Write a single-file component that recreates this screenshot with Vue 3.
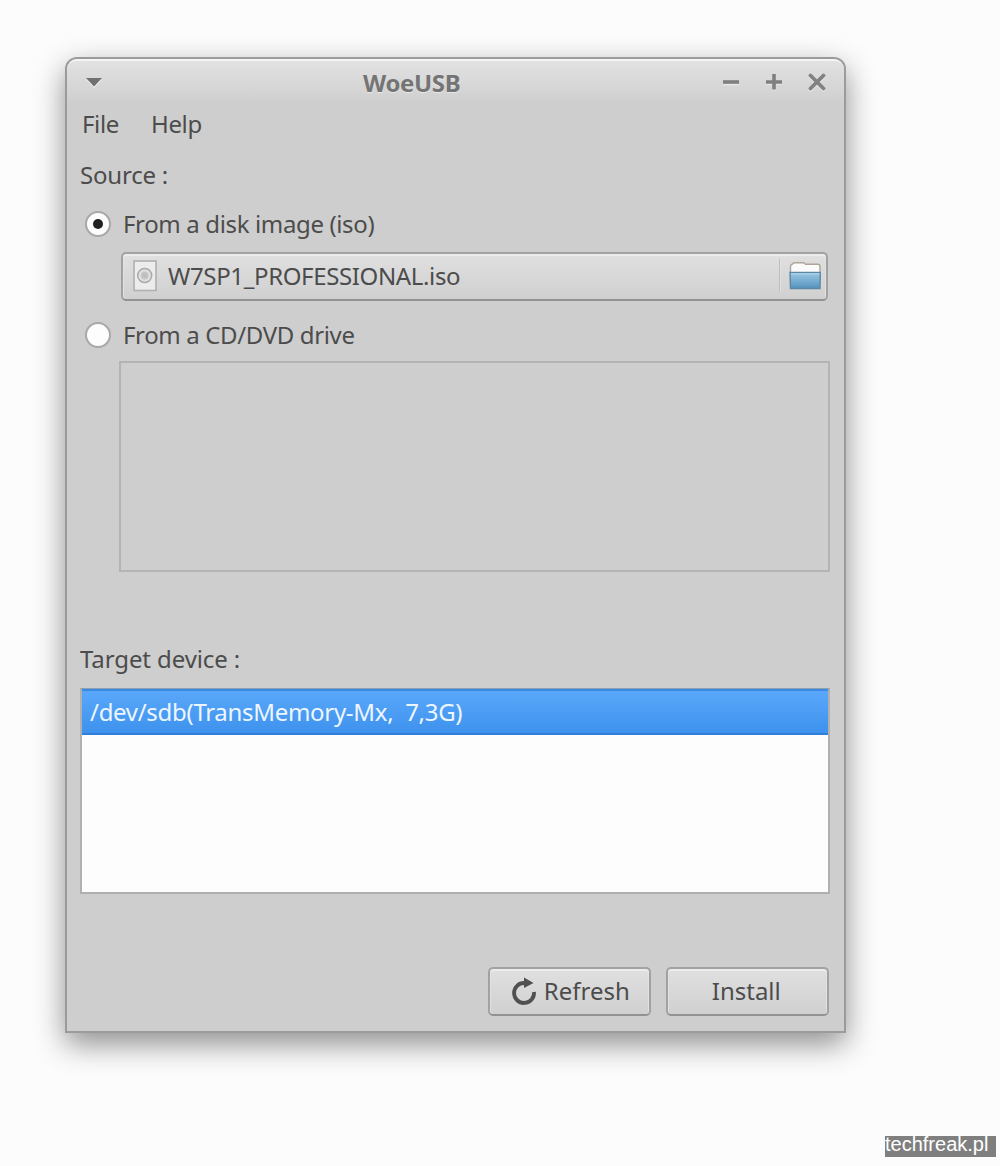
<script setup>
import { ref } from 'vue'

const menus = ['File', 'Help']
const source = ref('iso')
const devices = ['/dev/sdb(TransMemory-Mx,  7,3G)']
const selected = ref(0)
</script>

<template>
  <main class="desktop">
    <section class="window">
      <header class="titlebar">
        <svg class="menu-arrow" width="20" height="14" viewBox="0 0 20 14">
          <path d="M2 3.5H18L10 12z" fill="#eee" />
          <path d="M2 2H18L10 10.5z" fill="#707070" />
        </svg>
        <h1 class="title">WoeUSB</h1>
        <div class="controls">
          <svg width="18" height="20" viewBox="0 0 18 20"><path d="M1 11.5H17" stroke="#e6e6e6" stroke-width="4" /><path d="M1 10H17" stroke="#7f7f7f" stroke-width="3.6" /></svg>
          <svg width="18" height="20" viewBox="0 0 18 20"><path d="M1 11H17M9 3.5V18.5" stroke="#e6e6e6" stroke-width="4" /><path d="M1 10H17M9 2V17.5" stroke="#7f7f7f" stroke-width="3.6" /></svg>
          <svg width="18" height="20" viewBox="0 0 18 20"><path d="M2.5 4.5L15.5 17.5M15.5 4.5L2.5 17.5" stroke="#e6e6e6" stroke-width="4" stroke-linecap="round" /><path d="M2.5 3.5L15.5 16.5M15.5 3.5L2.5 16.5" stroke="#828282" stroke-width="3.8" stroke-linecap="round" /></svg>
        </div>
      </header>

      <nav class="menubar">
        <span v-for="m in menus" :key="m">{{ m }}</span>
      </nav>

      <div class="body">
        <div class="label source-label">Source :</div>

        <div class="radio-row first" @click="source = 'iso'">
          <span class="radio"><i v-if="source === 'iso'"></i></span>
          <span class="iso-label">From a disk image (iso)</span>
        </div>

        <div class="picker">
          <svg class="file-icon" width="24" height="32" viewBox="0 0 24 32">
            <rect x="1" y="1" width="22" height="29.5" fill="#ececec" stroke="#b0b0b0" stroke-width="1.6" />
            <circle cx="11.7" cy="15.5" r="7" fill="#e0e0e0" stroke="#a9a9a9" stroke-width="1.5" />
            <circle cx="11.7" cy="15.5" r="3" fill="#bdbdbd" stroke="#c6c6c6" stroke-width="1.8" />
          </svg>
          <span class="file-name">W7SP1_PROFESSIONAL.iso</span>
          <span class="divider"></span>
          <svg class="folder" width="34" height="30" viewBox="0 0 34 30">
            <defs>
              <linearGradient id="folder-front" x1="0" y1="0" x2="0" y2="1">
                <stop offset="0" stop-color="#9cc8e3" />
                <stop offset="1" stop-color="#5593bf" />
              </linearGradient>
            </defs>
            <path d="M2.5 12V5.5Q2.5 3.5 4.5 3L6 1.7H15Q16.5 1.7 17.5 3.3H30Q32 3.3 32 5.5V12z" fill="#fbfbfb" stroke="#ada49b" stroke-width="1.4" />
            <path d="M2 11.5H32.3L32 27.5H2.5z" fill="url(#folder-front)" stroke="#5c87a5" stroke-width="1.4" />
            <path d="M3 12.8H31.5" stroke="#b0d4ea" stroke-width="1.2" />
          </svg>
        </div>

        <div class="radio-row second" @click="source = 'dvd'">
          <span class="radio"><i v-if="source === 'dvd'"></i></span>
          <span class="dvd-label">From a CD/DVD drive</span>
        </div>

        <div class="drive-list"></div>

        <div class="label target-label">Target device :</div>

        <ul class="device-list">
          <li v-for="(d, i) in devices" :key="d" :class="{ active: i === selected }" @click="selected = i">
            <span>{{ d }}</span>
          </li>
        </ul>

        <footer class="actions">
          <button type="button">
            <svg class="refresh" width="26" height="30" viewBox="0 0 26 30">
              <path d="M13.5 7A10 10 0 1 0 23 16" fill="none" stroke="#505050" stroke-width="3.8" />
              <path d="M13 1.5L22.5 7L13 12z" fill="#505050" />
            </svg>
            <span class="refresh-text">Refresh</span>
          </button>
          <button type="button"><span class="install-text">Install</span></button>
        </footer>
      </div>
    </section>
    <div class="watermark">techfreak.pl</div>
  </main>
</template>

<style>
body {
  margin: 0;
  background: #fcfcfc;
}
</style>

<style scoped>
.desktop {
  box-sizing: border-box;
  position: relative;
  width: 1000px;
  height: 1166px;
  padding: 57px 0 0 65px;
  overflow: hidden;
  background: #fcfcfc;
  color: #4c4c4c;
  font: 24px/32px "Noto Sans", sans-serif;
  white-space: pre;
}
.window {
  box-sizing: border-box;
  width: 780.5px;
  height: 976px;
  border: 2px solid #9b9b9b;
  border-radius: 12px 12px 0 0;
  background: #cecece;
  box-shadow: 0 11px 30px rgba(0, 0, 0, 0.44);
}
.titlebar {
  box-sizing: border-box;
  display: flex;
  align-items: center;
  height: 45px;
  padding: 0 18px 1px 17px;
  border-top: 2px solid #f4f4f4;
  border-radius: 10px 10px 0 0;
  background: linear-gradient(#e2e2e2, #cecece);
}
.menu-arrow {
  width: 20px;
  margin: 2px 259px 0 0;
}
.title {
  flex: 1;
  margin: 2px 0 0;
  color: #747474;
  font-size: 24px;
  font-weight: 700;
  line-height: 32px;
  letter-spacing: -0.35px;
  text-shadow: 0 1px #e8e8e8;
}
.controls {
  display: flex;
  gap: 25px;
}
.menubar {
  display: flex;
  gap: 32px;
  height: 40px;
  padding: 4px 15px 0;
  box-sizing: border-box;
  letter-spacing: -0.35px;
}
.body {
  padding: 0 13.5px 0 13px;
}
.label {
  height: 32px;
}
.source-label {
  margin-top: 15px;
  letter-spacing: -0.2px;
}
.radio-row {
  display: flex;
  align-items: center;
  gap: 12px;
  height: 32px;
  padding-left: 5px;
}
.first {
  margin-top: 17px;
}
.iso-label,
.dvd-label,
.file-name {
  letter-spacing: -0.36px;
}
.iso-label,
.dvd-label {
  margin-top: -1px;
}
.radio {
  display: flex;
  align-items: center;
  justify-content: center;
  box-sizing: border-box;
  width: 26px;
  height: 26px;
  border: 2px solid #a8a8a8;
  border-radius: 50%;
  background: #fdfdfd;
}
.radio i {
  width: 10px;
  height: 10px;
  border-radius: 50%;
  background: #202020;
}
.picker,
.actions button {
  box-sizing: border-box;
  display: flex;
  align-items: center;
  border: 2px solid #a2a2a2;
  border-bottom-color: #929292;
  border-radius: 5px;
  background: linear-gradient(#e0e0e0, #d0d0d0);
  box-shadow: inset 0 2px #ececec, inset 1px 0 #e2e2e2, inset -1px 0 #e2e2e2;
}
.picker {
  width: 707px;
  height: 49px;
  margin: 12px 0 0 41px;
  padding: 0 4px 2px 10px;
}
.file-name {
  margin-left: 11px;
}
.divider {
  width: 1px;
  height: 33px;
  margin-left: auto;
  background: #bdbdbd;
  box-shadow: 1px 0 #e2e2e2;
}
.folder {
  margin-left: 8px;
}
.second {
  margin-top: 18px;
}
.drive-list {
  box-sizing: border-box;
  width: 711px;
  height: 211px;
  margin: 10px 0 0 39px;
  border: 2px solid #b4b4b4;
}
.target-label {
  margin-top: 71px;
  letter-spacing: -0.1px;
}
.device-list {
  box-sizing: border-box;
  width: 750px;
  height: 206px;
  margin: 13px 0 0;
  padding: 0;
  border: 2px solid #b0b0b0;
  border-top: 1px solid #8b9fb5;
  background: #fdfdfd;
  list-style: none;
}
.device-list li {
  box-sizing: border-box;
  height: 46px;
  padding: 7px 8px;
}
.device-list li.active {
  border-top: 2px solid #3b89e0;
  border-bottom: 2px solid #2f7fdb;
  padding-top: 5px;
  background: linear-gradient(#59a7fa, #3e92ed);
  color: #edf6ff;
  letter-spacing: -0.3px;
}
.actions {
  display: flex;
  justify-content: flex-end;
  gap: 15.5px;
  margin: 73px 1.5px 0 0;
}
.actions button {
  justify-content: center;
  width: 162.5px;
  height: 49px;
  padding: 0 0 1px;
  color: inherit;
  font: inherit;
}
.refresh {
  margin: 0 7px 0 2px;
}
.install-text {
  margin-right: 2px;
}
.watermark {
  position: absolute;
  top: 1136px;
  left: 885px;
  width: 111px;
  height: 21px;
  background: #7f7f7f;
  color: #fff;
  font: 20px/16px "Liberation Sans", Arial, sans-serif;
}
</style>
